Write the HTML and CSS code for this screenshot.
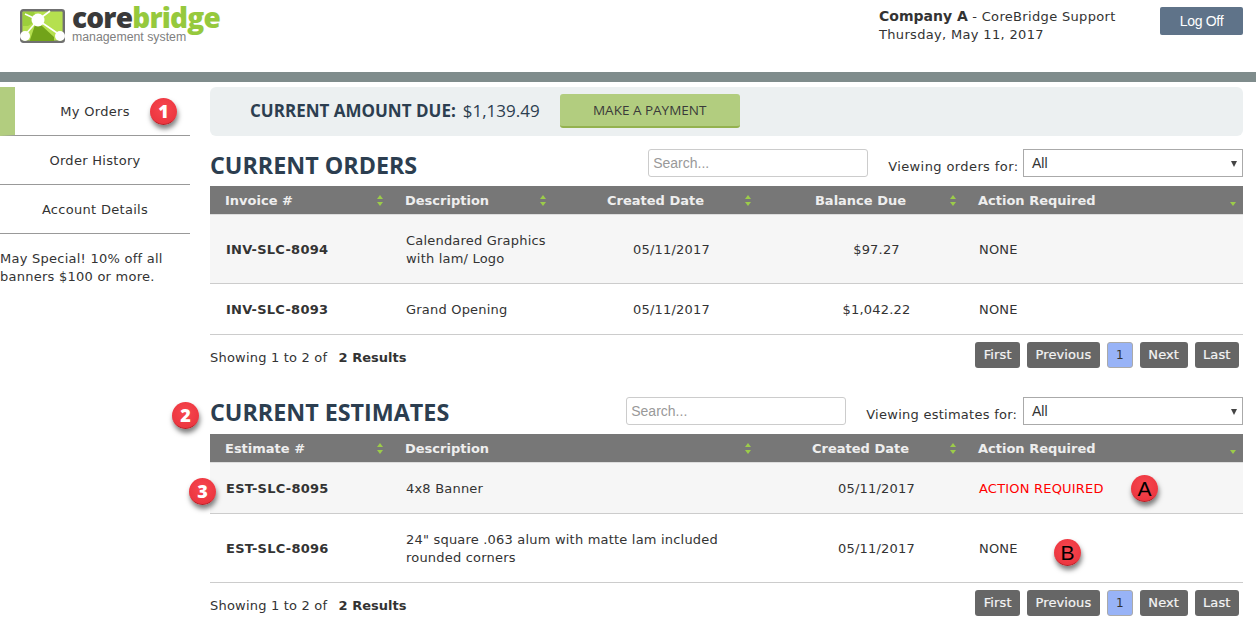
FILE: index.html
```html
<!DOCTYPE html>
<html lang="en">
<head>
  <meta charset="UTF-8" />
  <title>My Orders - CoreBridge</title>
  <link rel="stylesheet" href="styles.css">
</head>
<body>
  <!-- Header -->
  <header class="top-header">
    <div class="logo">
      <svg class="logo-mark" width="45" height="34" viewBox="0 0 45 34">
        <rect x="1.2" y="1.2" width="42.6" height="31.6" rx="2" fill="#b5e04f" stroke="#707070" stroke-width="2.4" />
        <path d="M3 3 L14 3 L18 11 L8 17 L3 17 Z" fill="#9ccf3c" />
        <path d="M10 31 L15 16 L21 16 L34 28 L34 32 L10 32 Z" fill="#72a31a" />
        <path d="M18 11 L5 26 M18 11 L40 26 M18 11 L30 2 M18 11 L5 5" stroke="#fff" stroke-width="1.6" />
        <circle cx="18" cy="11" r="6.5" fill="#fff" />
        <circle cx="5" cy="27" r="5" fill="#fff" />
        <circle cx="40" cy="27" r="5" fill="#fff" />
      </svg>
      <div class="logo-words">
        <div class="logo-name">core<span class="logo-green">bridge</span></div>
        <div class="logo-sub">management system</div>
      </div>
    </div>
    <div class="user-info">
      <div><span class="company">Company A</span> - CoreBridge Support</div>
      <div>Thursday, May 11, 2017</div>
    </div>
    <button class="logoff-btn">Log Off</button>
  </header>
  <div class="header-bar"></div>

  <div class="page">
    <!-- Sidebar -->
    <nav class="sidebar">
      <a class="nav-item active">My Orders</a>
      <a class="nav-item">Order History</a>
      <a class="nav-item">Account Details</a>
      <p class="special">May Special! 10% off all banners $100 or more.</p>
    </nav>

    <main class="content">
      <div class="amount-panel">
        <span class="amount-label">CURRENT AMOUNT DUE:</span>
        <span class="amount-value">$1,139.49</span>
        <button class="pay-btn">MAKE A PAYMENT</button>
      </div>

      <!-- Current orders -->
      <section class="orders">
        <div class="section-head">
          <h2>CURRENT ORDERS</h2>
          <input class="search search-orders" type="text" placeholder="Search..." />
          <label class="viewing">Viewing orders for:</label>
          <div class="select">All</div>
        </div>
        <table class="data-table">
          <colgroup>
            <col class="col-a" /><col class="col-b" /><col class="col-c" /><col class="col-d" /><col />
          </colgroup>
          <thead>
            <tr>
              <th>Invoice #<i class="sort"></i></th>
              <th>Description<i class="sort"></i></th>
              <th class="center">Created Date<i class="sort"></i></th>
              <th class="center">Balance Due<i class="sort"></i></th>
              <th>Action Required<i class="sort sort-down"></i></th>
            </tr>
          </thead>
          <tbody>
            <tr class="tall odd">
              <td class="strong">INV-SLC-8094</td>
              <td>Calendared Graphics<br />with lam/ Logo</td>
              <td class="shifted">05/11/2017</td>
              <td class="shifted">$97.27</td>
              <td>NONE</td>
            </tr>
            <tr>
              <td class="strong">INV-SLC-8093</td>
              <td>Grand Opening</td>
              <td class="shifted">05/11/2017</td>
              <td class="shifted">$1,042.22</td>
              <td>NONE</td>
            </tr>
          </tbody>
        </table>
        <div class="table-foot">
          <div class="showing">Showing 1 to 2 of <b class="results">2 Results</b></div>
          <div class="pager">
            <a class="page-btn">First</a><a class="page-btn">Previous</a><a class="page-btn current">1</a><a class="page-btn">Next</a><a class="page-btn">Last</a>
          </div>
        </div>
      </section>

      <!-- Current estimates -->
      <section class="estimates">
        <div class="section-head">
          <h2>CURRENT ESTIMATES</h2>
          <input class="search search-estimates" type="text" placeholder="Search..." />
          <label class="viewing">Viewing estimates for:</label>
          <div class="select">All</div>
        </div>
        <table class="data-table">
          <colgroup>
            <col class="col-a" /><col class="col-bc" /><col class="col-d" /><col />
          </colgroup>
          <thead>
            <tr>
              <th>Estimate #<i class="sort"></i></th>
              <th>Description<i class="sort"></i></th>
              <th class="center">Created Date<i class="sort"></i></th>
              <th>Action Required<i class="sort sort-down"></i></th>
            </tr>
          </thead>
          <tbody>
            <tr class="odd">
              <td class="strong">EST-SLC-8095</td>
              <td>4x8 Banner</td>
              <td class="shifted">05/11/2017</td>
              <td class="red">ACTION REQUIRED</td>
            </tr>
            <tr class="tall">
              <td class="strong">EST-SLC-8096</td>
              <td>24" square .063 alum with matte lam included<br />rounded corners</td>
              <td class="shifted">05/11/2017</td>
              <td>NONE</td>
            </tr>
          </tbody>
        </table>
        <div class="table-foot">
          <div class="showing">Showing 1 to 2 of <b class="results">2 Results</b></div>
          <div class="pager">
            <a class="page-btn">First</a><a class="page-btn">Previous</a><a class="page-btn current">1</a><a class="page-btn">Next</a><a class="page-btn">Last</a>
          </div>
        </div>
      </section>
    </main>
  </div>

  <!-- Callouts on top of the screenshot -->
  <span class="callout c-1">1</span>
  <span class="callout c-2">2</span>
  <span class="callout c-3">3</span>
  <span class="callout letter c-a">A</span>
  <span class="callout letter c-b">B</span>
</body>
</html>
```

FILE: styles.css
```css
* {
  margin: 0;
  padding: 0;
  box-sizing: border-box;
}

html, body {
  width: 1256px;
  height: 641px;
  overflow: hidden;
  background: white;
  color: #333;
  font-family: 'DejaVu Sans', Verdana, sans-serif;
  font-size: 13px;
}

/* Header */
.top-header {
  height: 72px;
  display: flex;
  align-items: flex-start;
  padding-left: 20px;
}

.logo {
  display: flex;
  gap: 7px;
  margin-top: 4px;
  width: 859px;
}

.logo-mark {
  margin-top: 5px;
}

.logo-name {
  font-family: 'Open Sans', sans-serif;
  font-weight: 800;
  font-size: 28px;
  line-height: 26px;
  letter-spacing: -0.8px;
  color: #3a3a3a;
}

.logo-green {
  color: #96c93d;
}

.logo-sub {
  font-family: 'Liberation Sans', sans-serif;
  font-size: 12.3px;
  line-height: 12px;
  margin-top: 1px;
  color: #808080;
}

.user-info {
  width: 281px;
  margin-top: 7px;
  line-height: 18px;
  letter-spacing: 0.33px;
}

.company {
  font-weight: bold;
  font-size: 14px;
  letter-spacing: 0;
}

.logoff-btn {
  width: 83px;
  height: 28px;
  margin-top: 7px;
  background: #5f7389;
  color: white;
  border: none;
  border-radius: 2px;
  font-family: 'Liberation Sans', sans-serif;
  font-size: 14px;
  letter-spacing: -0.3px;
}

.header-bar {
  height: 10px;
  background: #7f8c8c;
}

/* Page */
.page {
  display: flex;
  gap: 20px;
  padding-top: 5px;
}

.sidebar {
  width: 190px;
  flex-shrink: 0;
}

.nav-item {
  display: block;
  height: 49px;
  line-height: 49px;
  text-align: center;
  border-bottom: 1px solid #999;
  letter-spacing: 0.3px;
}

.nav-item.active {
  border-left: 15px solid #b2cd7f;
  padding-right: 15px;
}

.special {
  margin-top: 16px;
  line-height: 18px;
  letter-spacing: 0.25px;
}

.content {
  width: 1033px;
}

.amount-panel {
  height: 49px;
  padding-left: 40px;
  display: flex;
  align-items: center;
  background: #ecf0f1;
  border-radius: 6px;
  color: #2c3e50;
}

.amount-label {
  font-family: 'Open Sans', sans-serif;
  font-weight: 700;
  font-size: 17px;
  margin-top: -2px;
}

.amount-value {
  font-family: 'Open Sans', sans-serif;
  font-size: 17px;
  margin-left: 7px;
  margin-top: -2px;
}

.pay-btn {
  width: 180px;
  height: 34px;
  margin-left: 20px;
  margin-bottom: 2px;
  background: #b2cd7f;
  border: none;
  border-bottom: 2px solid #94b24f;
  border-radius: 3px;
  color: #3a3a3a;
  font-family: 'Open Sans', sans-serif;
  font-size: 13.5px;
}

.section-head {
  height: 50px;
  display: flex;
  align-items: flex-start;
}

.section-head h2 {
  font-family: 'Open Sans', sans-serif;
  font-weight: 700;
  font-size: 23.3px;
  line-height: 31px;
  margin-top: 14px;
  color: #2c3e50;
}

.estimates .section-head h2 {
  margin-top: 13px;
}

.search {
  height: 28px;
  width: 220px;
  margin-top: 13px;
  padding: 0 4px;
  border: 1px solid #ccc;
  border-radius: 3px;
  font-family: 'Liberation Sans', sans-serif;
  font-size: 14px;
}

.search::placeholder {
  color: #999;
}

.search-orders {
  margin-left: 231px;
}

.search-estimates {
  margin-left: 177px;
}

.viewing {
  margin-left: 20px;
  margin-top: 23px;
  letter-spacing: 0.4px;
}

.estimates .viewing {
  letter-spacing: 0.26px;
}

.select {
  width: 220px;
  height: 28px;
  margin-left: auto;
  margin-top: 13px;
  padding: 0 8px;
  border: 1px solid #aaa;
  line-height: 26px;
  font-family: 'Liberation Sans', sans-serif;
  font-size: 14px;
  position: relative;
}

.select::after {
  content: "";
  position: absolute;
  right: 5px;
  top: 11px;
  border-left: 3px solid transparent;
  border-right: 3px solid transparent;
  border-top: 6px solid #444;
}

/* Tables */
.data-table {
  width: 100%;
  table-layout: fixed;
  border-collapse: separate;
  border-spacing: 0;
}

.col-a { width: 180px; }
.col-b { width: 163px; }
.col-c { width: 205px; }
.col-d { width: 205px; }
.col-bc { width: 368px; }

.data-table th {
  position: relative;
  height: 29px;
  padding-left: 15px;
  background: #777;
  color: #eee;
  text-align: left;
  font-weight: bold;
  font-size: 13px;
  border-bottom: 1px solid #ddd;
}

.data-table th.center {
  text-align: center;
  padding-left: 0;
}

.data-table td {
  height: 51px;
  padding-left: 16px;
  padding-top: 2px;
  border-bottom: 1px solid #ccc;
  line-height: 18px;
  letter-spacing: 0.2px;
}

.data-table .tall td {
  height: 69px;
}

.data-table .odd td {
  background: #f6f6f6;
}

.data-table td.strong {
  font-weight: bold;
  letter-spacing: 0.25px;
}

.data-table td.shifted {
  text-align: center;
  padding-left: 32px;
}

.data-table td.red {
  color: #f00;
}

.sort {
  position: absolute;
  right: 6px;
  top: 9px;
  width: 7px;
  height: 11px;
}

.sort::before, .sort::after {
  content: "";
  position: absolute;
  left: 0;
  border-left: 3.5px solid transparent;
  border-right: 3.5px solid transparent;
}

.sort::before {
  top: 0;
  border-bottom: 4px solid #9ccc4a;
}

.sort::after {
  bottom: 0;
  border-top: 4px solid #9ccc4a;
}

.sort-down::before {
  display: none;
}

.table-foot {
  height: 49px;
  padding-top: 7px;
  display: flex;
  justify-content: space-between;
  align-items: flex-start;
  letter-spacing: 0.2px;
}

.showing {
  margin-top: 8px;
}

.results {
  margin-left: 7px;
  letter-spacing: 0;
}

.pager {
  display: flex;
  gap: 7px;
  margin-right: 4px;
}

.page-btn {
  height: 26px;
  padding: 0 8.5px;
  line-height: 26px;
  background: #666;
  color: #f4f4f4;
  border-radius: 3px;
  letter-spacing: 0.1px;
  -webkit-text-stroke: 0.2px #f4f4f4;
}

.page-btn.current {
  background: #98b3f7;
  color: #333;
  border: 1px solid #aaa;
  padding: 0;
  line-height: 24px;
  width: 26px;
  text-align: center;
  font-size: 12px;
  -webkit-text-stroke: 0;
}

/* Numbered callouts */
.callout {
  position: absolute;
  width: 27px;
  height: 27px;
  border-radius: 50%;
  background: radial-gradient(circle at 50% 40%, #f7474f, #e8303a);
  border-bottom: 1px solid #b52027;
  box-shadow: 1px 4px 5px rgba(0, 0, 0, 0.5);
  color: white;
  font-family: 'Open Sans', sans-serif;
  font-weight: 800;
  font-size: 18px;
  line-height: 27px;
  text-align: center;
}

.callout.letter {
  color: black;
  font-family: 'Liberation Sans', sans-serif;
  font-weight: normal;
  font-size: 21px;
}

.c-1 { left: 150px; top: 98px; }
.c-2 { left: 172px; top: 402px; }
.c-3 { left: 189px; top: 478px; }
.c-a { left: 1131px; top: 475px; }
.c-b { left: 1054px; top: 539px; }
```
